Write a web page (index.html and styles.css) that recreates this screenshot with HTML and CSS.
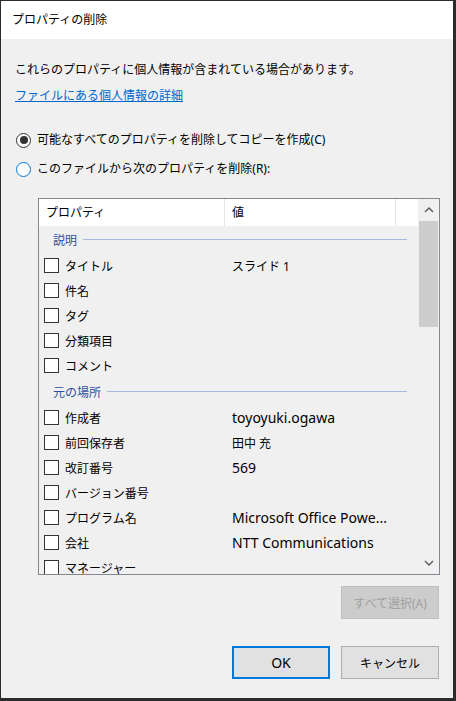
FILE: index.html
```html
<!DOCTYPE html>
<html lang="ja">
<head>
<meta charset="utf-8">
<title>プロパティの削除</title>
<link rel="stylesheet" href="styles.css">
</head>
<body>
<div class="window">
  <div class="titlebar">プロパティの削除</div>
  <div class="content">
    <p class="intro">これらのプロパティに個人情報が含まれている場合があります。</p>
    <a class="link" href="#">ファイルにある個人情報の詳細</a>
    <div class="radio-row first"><span class="radio checked"></span><span>可能なすべてのプロパティを削除してコピーを作成(C)</span></div>
    <div class="radio-row second"><span class="radio focus"></span><span>このファイルから次のプロパティを削除(R):</span></div>

    <div class="listbox">
      <div class="list-main">
        <div class="list-header">
          <div class="hcol hcol-prop">プロパティ</div>
          <div class="hcol hcol-val">値</div>
          <div class="hcol hcol-rest"></div>
        </div>
        <div class="list-body">
          <div class="group first-group"><span class="group-title">説明</span><span class="group-line"></span></div>
          <div class="row"><span class="cell-label"><span class="checkbox"></span>タイトル</span><span class="cell-value">スライド 1</span></div>
          <div class="row"><span class="cell-label"><span class="checkbox"></span>件名</span><span class="cell-value"></span></div>
          <div class="row"><span class="cell-label"><span class="checkbox"></span>タグ</span><span class="cell-value"></span></div>
          <div class="row"><span class="cell-label"><span class="checkbox"></span>分類項目</span><span class="cell-value"></span></div>
          <div class="row"><span class="cell-label"><span class="checkbox"></span>コメント</span><span class="cell-value"></span></div>
          <div class="group"><span class="group-title">元の場所</span><span class="group-line"></span></div>
          <div class="row"><span class="cell-label"><span class="checkbox"></span>作成者</span><span class="cell-value latin">toyoyuki.ogawa</span></div>
          <div class="row"><span class="cell-label"><span class="checkbox"></span>前回保存者</span><span class="cell-value">田中 充</span></div>
          <div class="row"><span class="cell-label"><span class="checkbox"></span>改訂番号</span><span class="cell-value latin">569</span></div>
          <div class="row"><span class="cell-label"><span class="checkbox"></span>バージョン番号</span><span class="cell-value"></span></div>
          <div class="row"><span class="cell-label"><span class="checkbox"></span>プログラム名</span><span class="cell-value latin">Microsoft Office Powe...</span></div>
          <div class="row"><span class="cell-label"><span class="checkbox"></span>会社</span><span class="cell-value latin">NTT Communications</span></div>
          <div class="row"><span class="cell-label"><span class="checkbox"></span>マネージャー</span><span class="cell-value"></span></div>
        </div>
      </div>
      <div class="scrollbar">
        <div class="sb-btn"><svg width="10" height="6" viewBox="0 0 10 6"><polyline points="1,5 5,1 9,5" fill="none" stroke="#606060" stroke-width="1.5"/></svg></div>
        <div class="sb-track"><div class="sb-thumb"></div></div>
        <div class="sb-btn"><svg width="10" height="6" viewBox="0 0 10 6"><polyline points="1,1 5,5 9,1" fill="none" stroke="#606060" stroke-width="1.5"/></svg></div>
      </div>
    </div>

    <div class="btn-row select-row"><button class="btn disabled" disabled>すべて選択(A)</button></div>
    <div class="btn-row action-row"><button class="btn default"><span class="latin">OK</span></button><button class="btn">キャンセル</button></div>
  </div>
</div>
</body>
</html>
```

FILE: styles.css
```css
* { box-sizing: border-box; }
html, body { margin: 0; padding: 0; }
body {
  background: #2b2b2b;
  width: 456px;
  height: 701px;
  overflow: hidden;
  font-family: "Noto Sans", "Noto Sans CJK JP", sans-serif;
  font-size: 12px;
  color: #000;
}
.latin { font-size: 14px; }
.window {
  margin: 1px 3px 3px 1px;
  height: 697px;
  display: flex;
  flex-direction: column;
  background: #f0f0f0;
}
.titlebar {
  height: 38px;
  background: #fff;
  padding-left: 11px;
  line-height: 38px;
  font-size: 12px;
}
.content {
  flex: 1;
  display: flex;
  flex-direction: column;
  padding: 22px 14px 0 14px;
}
.intro {
  margin: 0;
  height: 18px;
  line-height: 18px;
}
.link {
  margin-top: 8px;
  height: 18px;
  line-height: 18px;
  color: #0066cc;
  text-decoration: underline;
  align-self: flex-start;
}
.radio-row {
  display: flex;
  align-items: center;
  gap: 6px;
  height: 18px;
  line-height: 18px;
  margin-left: 1px;
}
.radio-row.first { margin-top: 26px; }
.radio-row.second { margin-top: 11px; }
.radio {
  width: 15px;
  height: 15px;
  border-radius: 50%;
  border: 1px solid #333;
  background: #fff;
  flex: none;
  display: flex;
  align-items: center;
  justify-content: center;
}
.radio.checked::after {
  content: "";
  width: 8px;
  height: 8px;
  border-radius: 50%;
  background: #333;
}
.radio.focus { border-color: #0078d7; }

.listbox {
  margin-top: 20px;
  margin-left: 23px;
  width: 402px;
  height: 377px;
  border: 1px solid #828790;
  display: flex;
  background: #f0f0f0;
}
.list-main {
  flex: 1;
  display: flex;
  flex-direction: column;
  overflow: hidden;
}
.list-header {
  height: 27px;
  background: #fff;
  display: flex;
  flex: none;
  line-height: 27px;
}
.hcol { padding-left: 7px; }
.hcol-prop { width: 186px; border-right: 1px solid #e5e5e5; }
.hcol-val { width: 171px; border-right: 1px solid #e5e5e5; }
.hcol-rest { flex: 1; }
.list-body {
  flex: 1;
  overflow: hidden;
}
.group {
  height: 27px;
  display: flex;
  align-items: center;
  padding-left: 14px;
  padding-right: 11px;
  gap: 6px;
}
.group-title { color: #2f4f9f; }
.group-line {
  flex: 1;
  height: 1px;
  background: #a8b9df;
}
.row {
  height: 25px;
  display: flex;
  align-items: center;
}
.cell-label {
  width: 193px;
  padding-left: 5px;
  display: flex;
  align-items: center;
  gap: 6px;
}
.checkbox {
  width: 15px;
  height: 15px;
  border: 1px solid #333;
  background: #fff;
  flex: none;
}
.cell-value {
  width: 170px;
  white-space: nowrap;
}
.scrollbar {
  width: 21px;
  display: flex;
  flex-direction: column;
  background: #f0f0f0;
}
.sb-btn {
  height: 22px;
  display: flex;
  align-items: center;
  justify-content: center;
}
.sb-track { flex: 1; }
.sb-thumb {
  height: 106px;
  margin: 0 1px 0 1px;
  background: #cdcdcd;
}

.btn-row {
  display: flex;
  justify-content: flex-end;
  gap: 11px;
}
.select-row { margin-top: 11px; }
.action-row { margin-top: 27px; }
.btn {
  width: 98px;
  height: 33px;
  font-family: inherit;
  font-size: 12px;
  color: #000;
  background: #e1e1e1;
  border: 1px solid #adadad;
  padding: 0;
  margin: 0;
}
.btn.default { border: 2px solid #0078d7; }
.btn.disabled {
  background: #cccccc;
  border-color: #bfbfbf;
  color: #a0a0a0;
}
```
